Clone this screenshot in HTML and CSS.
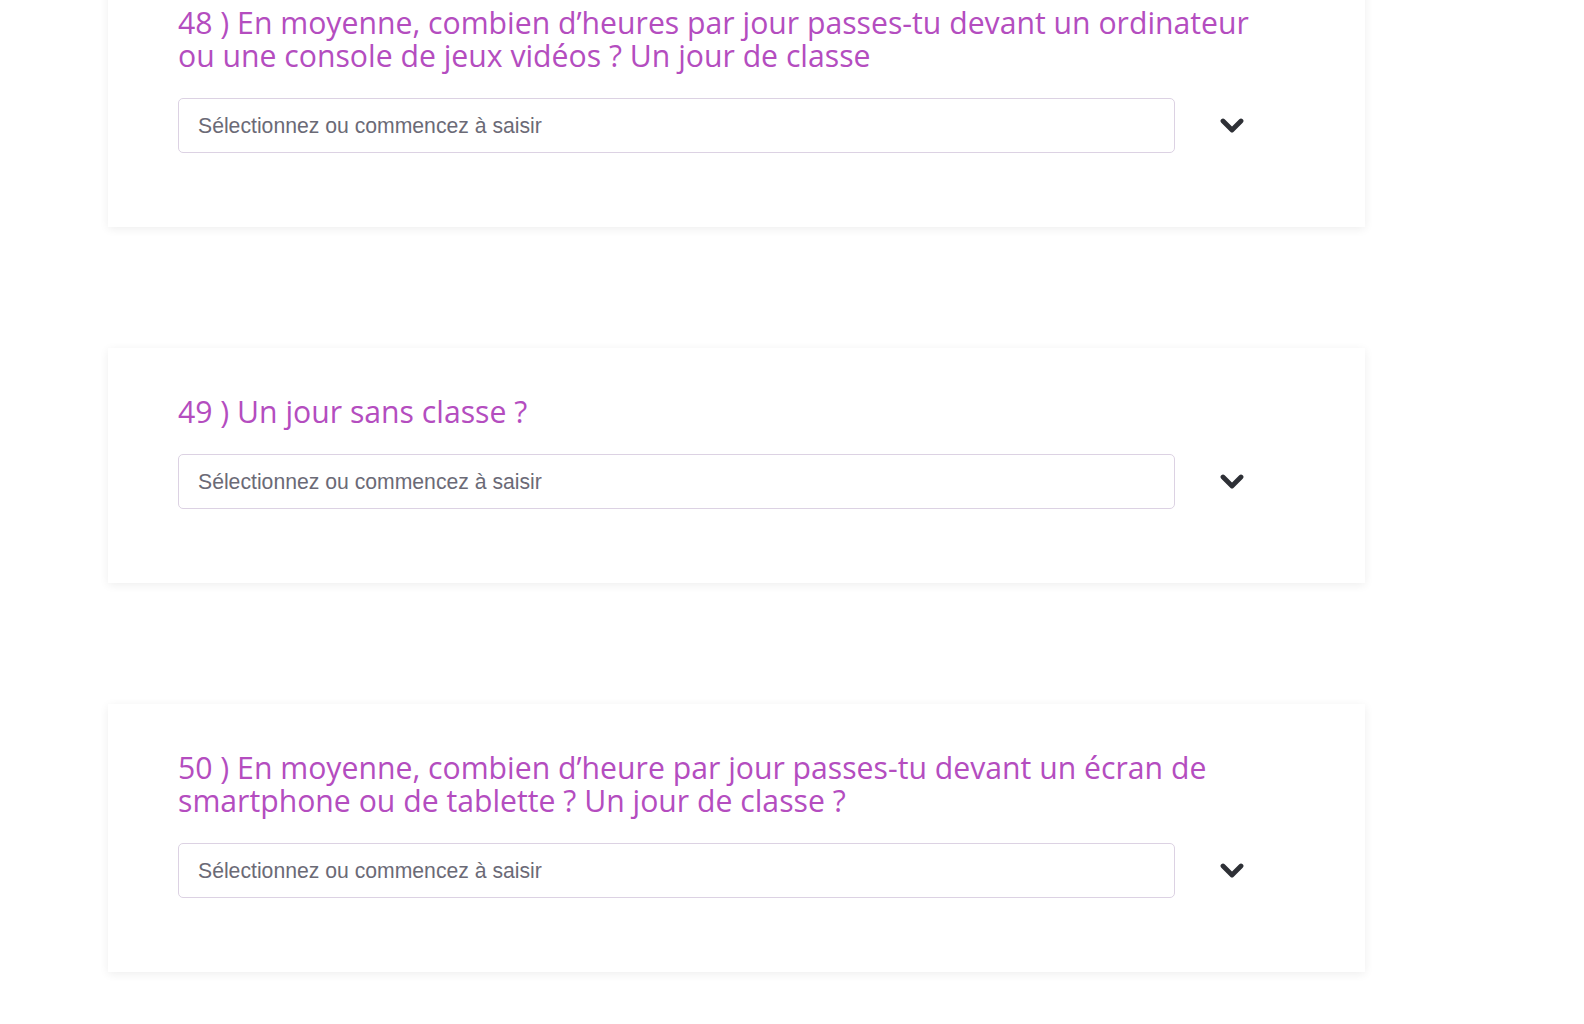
FILE: index.html
```html
<!DOCTYPE html>
<html lang="fr">

<head>
  <meta charset="UTF-8">
  <meta name="viewport" content="width=device-width, initial-scale=1.0">
  <title>Questionnaire</title>
  <link rel="stylesheet" href="styles.css">
</head>

<body>
  <main class="survey">
    <section class="question-card">
      <h2 class="question-title">48 ) En moyenne, combien d’heures par jour passes-tu devant un ordinateur ou une console de jeux vidéos ? Un jour de classe</h2>
      <div class="select-row">
        <input type="text" class="select-input" placeholder="Sélectionnez ou commencez à saisir">
        <span class="select-arrow">
          <svg width="24" height="17" viewBox="0 0 24 17"><polyline points="3,4 12,13 21,4" fill="none" stroke="#2e3036" stroke-width="4.8" stroke-linecap="round" stroke-linejoin="round"/></svg>
        </span>
      </div>
    </section>

    <section class="question-card">
      <h2 class="question-title">49 ) Un jour sans classe ?</h2>
      <div class="select-row">
        <input type="text" class="select-input" placeholder="Sélectionnez ou commencez à saisir">
        <span class="select-arrow">
          <svg width="24" height="17" viewBox="0 0 24 17"><polyline points="3,4 12,13 21,4" fill="none" stroke="#2e3036" stroke-width="4.8" stroke-linecap="round" stroke-linejoin="round"/></svg>
        </span>
      </div>
    </section>

    <section class="question-card">
      <h2 class="question-title">50 ) En moyenne, combien d’heure par jour passes-tu devant un écran de smartphone ou de tablette ? Un jour de classe ?</h2>
      <div class="select-row">
        <input type="text" class="select-input" placeholder="Sélectionnez ou commencez à saisir">
        <span class="select-arrow">
          <svg width="24" height="17" viewBox="0 0 24 17"><polyline points="3,4 12,13 21,4" fill="none" stroke="#2e3036" stroke-width="4.8" stroke-linecap="round" stroke-linejoin="round"/></svg>
        </span>
      </div>
    </section>
  </main>
</body>

</html>
```

FILE: styles.css
```css
/* Page */
body {
  margin: 0;
  background-color: #ffffff;
  font-family: 'Open Sans', 'Noto Sans', sans-serif;
}

/* page is scrolled, first card starts above the fold */
.survey {
  margin-top: -41px;
  padding: 0 0 80px 108px;
  display: flex;
  flex-direction: column;
  gap: 121px;
}

/* Question cards */
.question-card {
  width: 1257px;
  box-sizing: border-box;
  padding: 47px 70px 74px;
  background-color: #ffffff;
  box-shadow: 0 2px 9px rgba(0, 0, 0, 0.07);
}

.question-title {
  margin: 0 0 26px;
  max-width: 1095px;
  font-size: 30.2px;
  font-weight: 400;
  line-height: 33px;
  color: #b44dbf;
}

/* Select field */
.select-row {
  display: flex;
  align-items: center;
  gap: 45px;
}

.select-input {
  width: 997px;
  height: 55px;
  box-sizing: border-box;
  padding: 0 19px;
  border: 1px solid #dcd2e3;
  border-radius: 5px;
  font-family: 'Liberation Sans', Arial, sans-serif;
  font-size: 21.2px;
  color: #333333;
  outline: none;
}

.select-input::placeholder {
  color: #6b6a76;
}

.select-arrow {
  display: flex;
  width: 24px;
  height: 17px;
}
```
